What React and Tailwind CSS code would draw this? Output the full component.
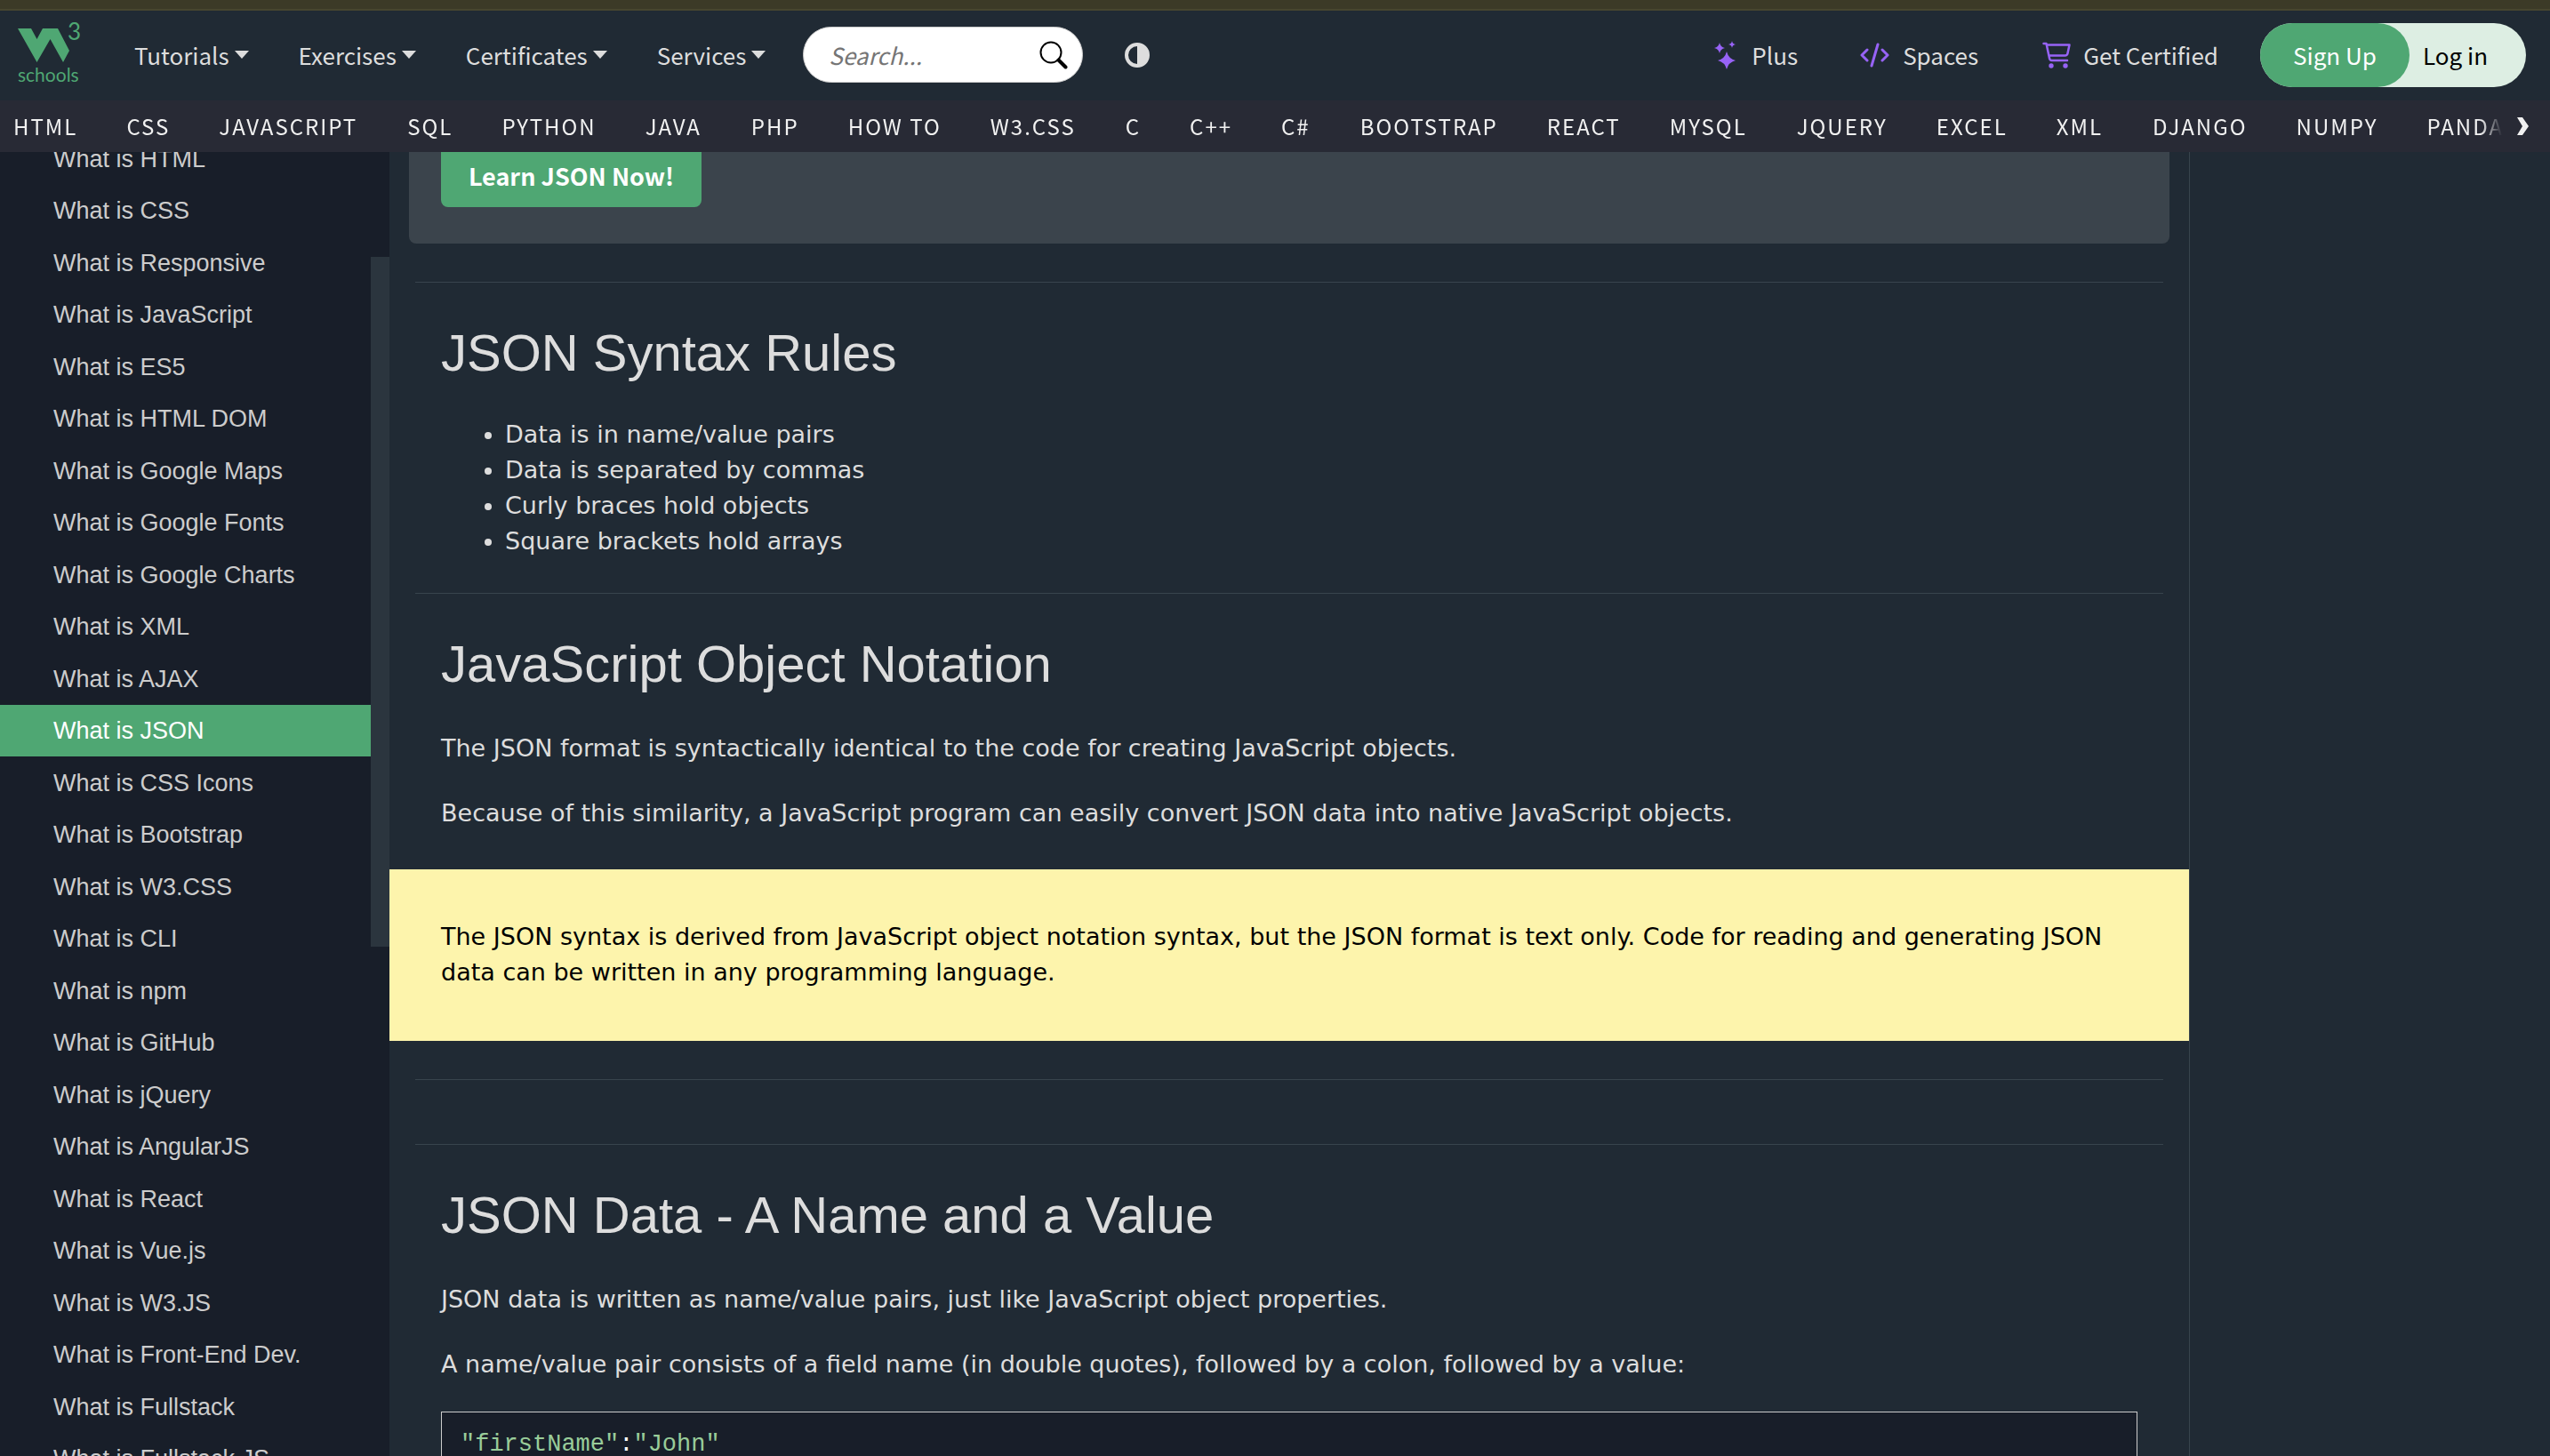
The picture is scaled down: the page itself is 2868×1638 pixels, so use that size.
import React from "react";

const menus = ["Tutorials", "Exercises", "Certificates", "Services"];

const topics = [
  "HTML", "CSS", "JAVASCRIPT", "SQL", "PYTHON", "JAVA", "PHP", "HOW TO", "W3.CSS", "C", "C++", "C#",
  "BOOTSTRAP", "REACT", "MYSQL", "JQUERY", "EXCEL", "XML", "DJANGO", "NUMPY", "PANDAS",
];

const sideLinks = [
  "HTML", "CSS", "Responsive", "JavaScript", "ES5", "HTML DOM", "Google Maps", "Google Fonts",
  "Google Charts", "XML", "AJAX", "JSON", "CSS Icons", "Bootstrap", "W3.CSS", "CLI", "npm", "GitHub",
  "jQuery", "AngularJS", "React", "Vue.js", "W3.JS", "Front-End Dev.", "Fullstack", "Fullstack JS",
];

const rules = [
  "Data is in name/value pairs",
  "Data is separated by commas",
  "Curly braces hold objects",
  "Square brackets hold arrays",
];

function Logo() {
  return (
    <a href="#home" aria-label="W3Schools home" className="mb-1 flex w-[71px] shrink-0 flex-col font-['Lato',sans-serif] text-[#4fa773]">
      <span className="flex items-start">
        <svg viewBox="0 0 58 38" className="mt-[7px] h-[38px] w-[58px] shrink-0" fill="currentColor" aria-hidden="true">
          <path d="M0 0H15L21.500 12L28 0H45L58 25L51 38L36.500 12L21.500 38Z" />
        </svg>
        <span className="-ml-[2px] text-[26px] leading-[20px]">3</span>
      </span>
      <span className="mt-1 text-[21px] leading-[20px]">schools</span>
    </a>
  );
}

function Sparkles() {
  return (
    <svg viewBox="0 0 24 32" className="h-8 w-6" fill="#9763f6" aria-hidden="true">
      <path d="M14 12Q16 20 24 22Q16 24 14 32Q12 24 4 22Q12 20 14 12Z" />
      <path d="M6 2Q7 7 12 8Q7 9 6 14Q5 9 0 8Q5 7 6 2Z" />
      <path d="M20 0Q20.500 3.500 24 4Q20.500 4.500 20 8Q19.500 4.500 16 4Q19.500 3.500 20 0Z" />
    </svg>
  );
}

function Rule() {
  return <hr className="mx-[29px] border-[#38444d]" />;
}

function Heading({ children }) {
  return (
    <h2 className="px-[58px] pt-[37px] font-['Liberation_Sans',Arial,sans-serif] text-[58px] leading-[84px]">{children}</h2>
  );
}

function Para({ children }) {
  return <p className="mt-[33px] px-[58px]">{children}</p>;
}

export default function App() {
  return (
    <div className="flex h-screen flex-col overflow-hidden bg-[#202a34] font-['Noto_Sans_CJK_SC',sans-serif] text-[#dddddd]">
      <div className="h-3 shrink-0 border-b-2 border-[#47462f] bg-[#3c3a27]" />
      <header className="flex h-[101px] shrink-0 items-center pb-[2px] pl-5 pr-[27px] text-[26px]">
        <Logo />
        <nav className="ml-[32px] flex">
          {menus.map((m) => (
            <button key={m} type="button" className="flex items-center gap-[6px] px-[28px]">
              {m}
              <svg viewBox="0 0 16 9" className="h-[9px] w-4" fill="currentColor" aria-hidden="true">
                <path d="M0 0H16L8 9Z" />
              </svg>
            </button>
          ))}
        </nav>
        <label className="ml-[14px] flex h-[63px] w-[315px] items-center rounded-full border border-[#cccccc] bg-white pl-7 pr-4">
          <input type="text" aria-label="Search" placeholder="Search..." className="w-full min-w-0 italic text-black outline-none placeholder:text-[#757575]" />
          <svg viewBox="0 0 32 32" className="h-8 w-8 shrink-0" fill="none" stroke="#000" aria-hidden="true">
            <circle cx="13" cy="13" r="11.500" strokeWidth="2" />
            <path d="M21.500 21.500L29.500 29.500" strokeWidth="4" strokeLinecap="round" />
          </svg>
        </label>
        <button type="button" aria-label="Toggle dark mode" className="ml-[47px]">
          <svg viewBox="0 0 28 28" className="h-7 w-7" aria-hidden="true">
            <circle cx="14" cy="14" r="12" fill="none" stroke="#ddd" strokeWidth="4" />
            <path d="M14 2A12 12 0 0 1 14 26Z" fill="#ddd" />
          </svg>
        </button>
        <div className="ml-auto flex items-center">
          <a href="#plus" className="flex items-center gap-[18px]"><Sparkles />Plus</a>
          <a href="#spaces" className="ml-[70px] flex items-center gap-[15px]">
            <svg viewBox="0 0 33 28" className="h-7 w-[33px]" fill="none" stroke="#9763f6" strokeWidth="3" strokeLinecap="round" strokeLinejoin="round" aria-hidden="true">
              <path d="M8 8L2 14L8 20M25 8L31 14L25 20M20 2L13 26" />
            </svg>
            Spaces
          </a>
          <a href="#certified" className="ml-[72px] flex items-center gap-[14px]">
            <svg viewBox="0 0 32 30" className="h-[30px] w-8" fill="none" stroke="#9763f6" strokeWidth="2.500" strokeLinecap="round" strokeLinejoin="round" aria-hidden="true">
              <path d="M1.500 2H4.500L8 18.500Q8.500 21 10.500 21H28M5 3.500H30.500L28.500 13Q28 15.500 25.500 15.500H7.500" />
              <circle cx="10" cy="27" r="2.700" fill="#9763f6" stroke="none" />
              <circle cx="26" cy="27" r="2.700" fill="#9763f6" stroke="none" />
            </svg>
            Get Certified
          </a>
          <div className="ml-[47px] flex h-[72px] rounded-full bg-[#ddeee3]">
            <a href="#signup" className="flex w-[168px] items-center justify-center rounded-full bg-[#4fa773] text-white">Sign Up</a>
            <a href="#login" className="flex w-[131px] items-center pl-[15px] text-black">Log in</a>
          </div>
        </div>
      </header>
      <nav className="flex h-[58px] shrink-0 items-center bg-[#282a35] text-[#f1f1f1]">
        <div className="flex min-w-0 flex-1 overflow-hidden pl-[15px] text-[24px] tracking-[2px] [mask-image:linear-gradient(to_left,transparent,#000_24px)]">
          {topics.map((t) => (
            <a key={t} href={"#" + t} className="mr-[55px] shrink-0 whitespace-nowrap nth-[3n]:mr-14">{t}</a>
          ))}
        </div>
        <button type="button" aria-label="Scroll right" className="w-[54px] pl-[17px]">
          <svg viewBox="0 0 13 20" className="h-5 w-[13px]" fill="#f1f1f1" aria-hidden="true"><path d="M0 0H6L13 10L6 20H0L6 10Z" /></svg>
        </button>
      </nav>

      <div className="flex min-h-0 flex-1">
        <aside className="flex w-[438px] shrink-0 overflow-hidden bg-[#181e29]">
          <nav className="-mt-[21px] flex-1 font-['Liberation_Sans',Arial,sans-serif] text-[27px] leading-[58px] text-[#cccccc]">
            {sideLinks.map((s) => (
              <a key={s} href={"#" + s} className={"block whitespace-nowrap pl-[60px] even:mb-px " + (s === "JSON" ? "bg-[#4fa773] text-white" : "")}>
                What is {s}
              </a>
            ))}
          </nav>
          <div className="mt-[118px] h-[776px] w-[21px] bg-[#2b353e]" />
        </aside>
        <main className="min-w-0 flex-1 overflow-hidden font-['DejaVu_Sans',Verdana,sans-serif] text-[27px] leading-[40px]">
          <div className="mx-[22px] mb-[43px] h-[103px] rounded-b-lg bg-[#3b444c] px-9">
            <a href="#learn" className="flex h-[62px] w-[293px] items-center justify-center rounded-b-lg bg-[#4fa773] pb-2 font-['Noto_Sans_CJK_SC',sans-serif] font-bold text-white">Learn JSON Now!</a>
          </div>
          <Rule />
          <Heading>JSON Syntax Rules</Heading>
          <ul className="mb-[38px] mt-[30px] list-disc pl-[130px]">
            {rules.map((r) => <li key={r}>{r}</li>)}
          </ul>
          <Rule />
          <Heading>JavaScript Object Notation</Heading>
          <Para>The JSON format is syntactically identical to the code for creating JavaScript objects.</Para>
          <Para>Because of this similarity, a JavaScript program can easily convert JSON data into native JavaScript objects.</Para>
          <div className="mb-[43px] mt-[43px] bg-[#fdf4ac] px-[58px] pb-[57px] pt-14 text-black">
            The JSON syntax is derived from JavaScript object notation syntax, but the JSON format is text only. Code for reading and generating JSON data can be written in any programming language.
          </div>
          <Rule />
          <div className="h-[72px]" />
          <Rule />
          <Heading>JSON Data - A Name and a Value</Heading>
          <Para>JSON data is written as name/value pairs, just like JavaScript object properties.</Para>
          <Para>A name/value pair consists of a field name (in double quotes), followed by a colon, followed by a value:</Para>
          <pre className="mx-[58px] mt-[33px] border border-[#cccccc] bg-[#181e29] px-[21px] py-[14px] font-['DejaVu_Sans_Mono',monospace] text-[#99cc99]">
            <code>&quot;firstName&quot;<span className="text-white">:</span>&quot;John&quot;</code>
          </pre>
        </main>
        <aside className="w-[406px] shrink-0 border-l border-[#38444d]" />
      </div>
    </div>
  );
}
